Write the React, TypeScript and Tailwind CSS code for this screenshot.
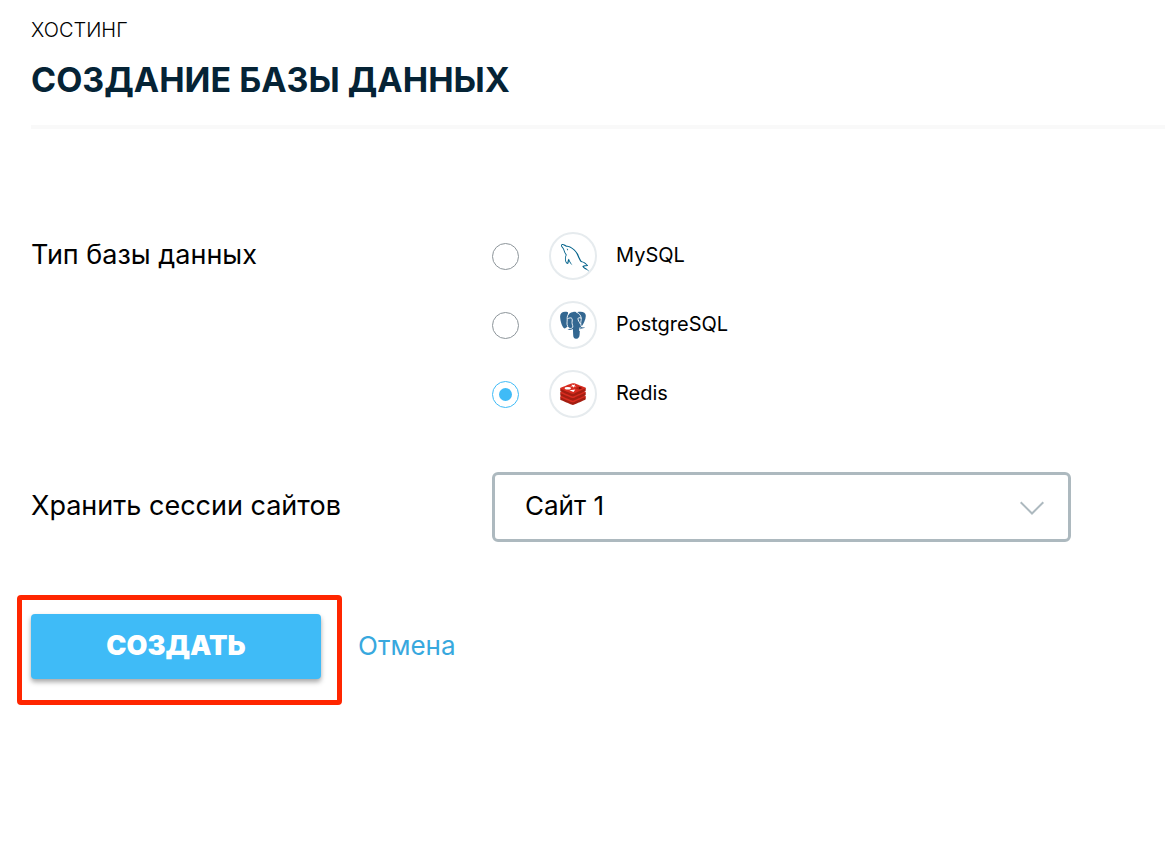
import { useState } from 'react';
import type { ReactNode } from 'react';
import { GrMysql } from 'react-icons/gr';

function PostgresIcon() {
  return (
    <svg viewBox="0 0 28 28" className="size-7" aria-hidden="true">
      <g fill="#336791">
        <path d="M9 1.2C4.5-.2 1 1.4 1.1 5.8c.1 3.800 1.800 9.600 3.700 11.300 1.100.9 2.200-.2 3.700-1.900L9.800 14z" />
        <path d="M18.500 1.100C23-.2 26.900 1.300 26.800 4.900c-.1 3.500-2.200 8.100-4.900 11.300L19 10z" />
        <path d="M14.300.9c3.800-.4 6.400 1.600 7.400 5.300.3 1.200.3 2.600.1 4.100-.3 2.200-.2 4 .2 5.700 1.300.5 2.500.5 3.900.3-1 1.100-2.900 1.500-4.600 1.400-.6 1.500-.5 3.500-.7 6-.2 2.500-1.200 3.800-3.200 4-2.100.2-3.100-1-3.200-3.400l-.3-6.300c-1.500.9-3.600 1.200-5.400.5 1.200-.3 2-.6 2.500-1.300-2-.8-2.900-2.300-2.700-4.600.2-2.400-.2-4.400.2-6.800C9.100 3 11 1.200 14.300.9z" />
      </g>
      <g fill="none" stroke="#fff" strokeWidth=".9" strokeLinecap="round">
        <path d="M10.600 1.500C8.400 3.500 8 6 8.200 8.500c.1 2.500-.7 4.500.2 6.200" />
        <path d="M8.700 7.700c1.500-1 3.700-1.200 4.300-.1.700 1.500-.3 3.200.2 5.300.3 1.200.8 2.300.6 3.200-.3 1-1.700 1.400-3 1.500" />
        <path d="M17.500 1.300c2.700.9 4.300 3 4.700 5.600.3 2.300-.8 4-.4 6.600.1 1 .5 1.700.9 2.300" />
        <path d="M21.900 7c-1.500-.6-2.800-.3-2.900.6-.1 1.700 1.300 3.500 2.300 5.200" />
        <path d="M21 16.600c-.4.900-.4 1.900-.5 2.900" />
      </g>
    </svg>
  );
}

const slabTop =
  'M121.8 80.5C115.1 84 80.4 98.2 73 102.100c-7.400 3.900-11.500 3.800-17.300 1-5.800-2.800-42.700-17.700-49.400-20.900C-.3 79-.5 76.800 6 74.300c6.500-2.600 43.200-17 51-19.700 7.800-2.800 10.400-2.900 17-.5s41.100 16.100 47.600 18.500c6.700 2.400 6.900 4.400.2 7.900z';
const slabSide =
  'M121.800 93.100c-6.700 3.500-41.400 17.700-48.800 21.600-7.400 3.900-11.500 3.800-17.300 1S13 98.100 6.300 94.900c-3.300-1.600-5-2.900-5-4.200V78l125.400-1.800v12.500c0 1.300-1.500 2.700-4.900 4.400z';

function RedisIcon() {
  return (
    <svg viewBox="0 10 128 108" className="h-[22px] w-[26px]" aria-hidden="true">
      {[0, -20.900, -41.800].map((y) => (
        <g key={y} transform={`translate(0 ${y})`}>
          <path fill="#a41e11" d={slabSide} />
          <path fill="#d82c20" d={slabTop} />
        </g>
      ))}
      <path
        fill="#fff"
        d="M80.400 26.100l-10.800 1.100-2.400 5.800-3.900-6.500-12.500-1.100 9.300-3.400-2.800-5.200 8.800 3.400 8.200-2.700L72 23.100zM66.500 54.500l-20.300-8.400 29.100-4.400z"
      />
      <ellipse fill="#fff" cx="38.400" cy="35.400" rx="15.500" ry="6" />
      <path fill="#7a0c00" d="M93.300 27.700l17.200 6.800-17.200 6.800z" />
      <path fill="#ad2115" d="M74.300 35.300l19-7.600v13.600l-1.900.7z" />
    </svg>
  );
}

const databases: { id: string; name: string; icon: ReactNode }[] = [
  { id: 'mysql', name: 'MySQL', icon: <GrMysql className="mt-1 ml-1 size-7 text-[#00618a]" aria-hidden="true" /> },
  { id: 'postgresql', name: 'PostgreSQL', icon: <PostgresIcon /> },
  { id: 'redis', name: 'Redis', icon: <RedisIcon /> },
];

export default function App() {
  const [selected, setSelected] = useState('redis');

  return (
    <main className="min-h-screen bg-white pt-4 pb-12 pl-[31px] font-['Inter',sans-serif] text-black">
      <header className="border-b-4 border-[#f9f9f9] pb-[25px]">
        <p className="text-[20px] leading-7 font-light">ХОСТИНГ</p>
        <h1 className="mt-4 text-[34px] leading-10 font-bold text-[#052335]">СОЗДАНИЕ БАЗЫ ДАННЫХ</h1>
      </header>

      <form className="mt-[103px] max-w-[1134px] pr-[94px]" onSubmit={(e) => e.preventDefault()}>
        <div
          role="radiogroup"
          aria-labelledby="db-type"
          className="grid grid-cols-[minmax(0,461px)_minmax(0,579px)]"
        >
          <span id="db-type" className="text-[27px] leading-[46px]">
            Тип базы данных
          </span>
          <div className="flex flex-col items-start gap-[21px]">
            {databases.map((db) => (
              <label key={db.id} className="flex cursor-pointer items-center">
                <input
                  type="radio"
                  name="database"
                  value={db.id}
                  checked={selected === db.id}
                  onChange={() => setSelected(db.id)}
                  className="grid size-[27px] shrink-0 cursor-pointer appearance-none place-content-center rounded-full border border-[#8d959a] before:size-[13px] before:rounded-full checked:border-[#3fbbf7] checked:before:bg-[#3fbbf7]"
                />
                <span className="ml-[30px] grid size-12 place-items-center rounded-full border-2 border-[#e6ebee]">
                  {db.icon}
                </span>
                <span className="ml-[19px] pb-0.5 text-[20px] leading-7">{db.name}</span>
              </label>
            ))}
          </div>
        </div>

        <div className="mt-[54px] grid grid-cols-[minmax(0,461px)_minmax(0,579px)] items-center">
          <label htmlFor="site" className="pb-0.5 text-[27px] leading-9">
            Хранить сессии сайтов
          </label>
          <div className="relative">
            <select
              id="site"
              className="h-[70px] w-full appearance-none rounded-md border-3 border-[#adb9bf] bg-white pr-16 pb-1 pl-[30px] text-[26px]"
            >
              <option>Сайт 1</option>
            </select>
            <svg
              viewBox="0 0 24 14"
              className="pointer-events-none absolute top-[29px] right-[27px] h-3.5 w-6"
              fill="none"
              stroke="#adb9bf"
              strokeWidth="2"
              aria-hidden="true"
            >
              <path d="M.7 1.200 12 12.500 23.300 1.200" />
            </svg>
          </div>
        </div>

        <div className="mt-[53px] flex items-center">
          <div className="-ml-3.5 rounded border-[5px] border-[#ff2600] pt-3.5 pr-4 pb-[21px] pl-[9px]">
            <button
              type="submit"
              className="h-[65px] w-[290px] rounded bg-[#3fbbf7] text-[27px] font-black text-white shadow-[0_3px_5px_rgba(0,0,0,0.350)]"
            >
              СОЗДАТЬ
            </button>
          </div>
          <a href="#cancel" className="ml-4 pb-2 text-[26px] leading-9 text-[#38a8de]">
            Отмена
          </a>
        </div>
      </form>
    </main>
  );
}
